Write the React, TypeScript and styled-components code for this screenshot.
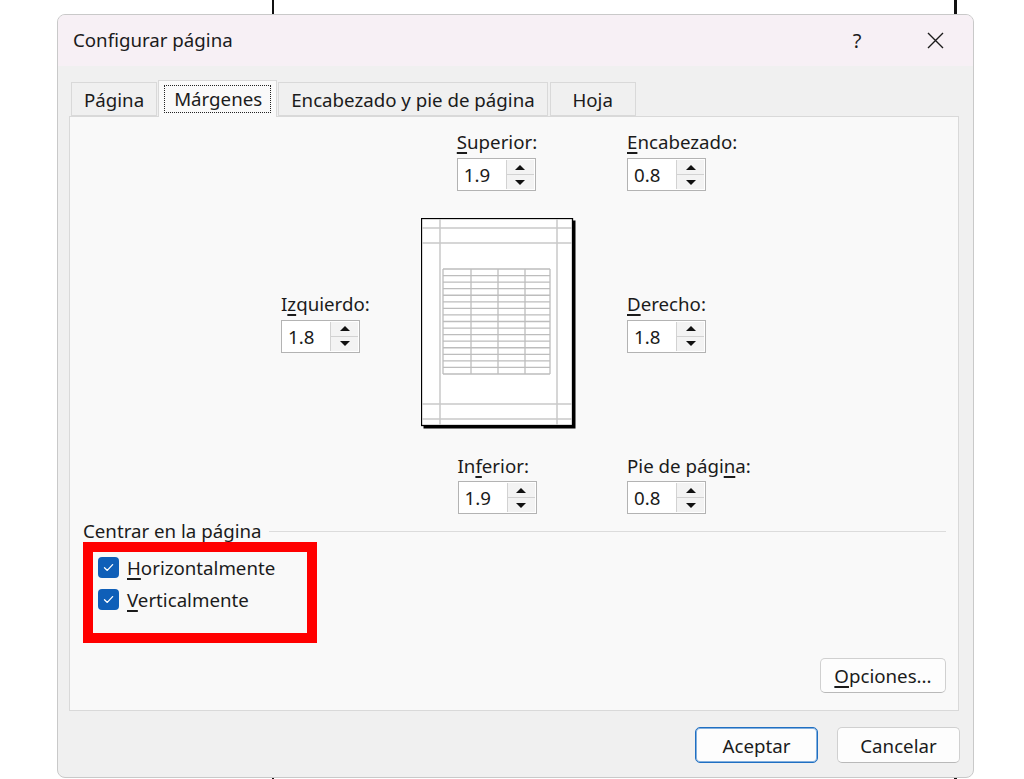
import React from 'react';
import styled, { createGlobalStyle } from 'styled-components';

const FONT = '18.7px';

const GlobalStyle = createGlobalStyle`
  html, body {
    margin: 0;
    padding: 0;
    background: #ffffff;
  }
  body {
    font-family: "Noto Sans", "Open Sans", "Liberation Sans", sans-serif;
    color: #1b1b1b;
  }
  u {
    text-underline-offset: 3px;
    text-decoration-thickness: 1.5px;
  }
`;

const Desk = styled.div`
  width: 1024px;
  height: 779px;
  box-sizing: border-box;
  padding: 14px 0 0 57px;
  background-color: #ffffff;
  background-image: linear-gradient(#111, #111), linear-gradient(#111, #111);
  background-size: 2px 100%, 3px 100%;
  background-position: 272px 0, 954px 0;
  background-repeat: no-repeat;
  overflow: hidden;
`;

const Dialog = styled.div`
  width: 917px;
  height: 764px;
  box-sizing: border-box;
  border: 1px solid #c9c9c9;
  border-radius: 8px;
  background: #f0f0f0;
  display: flex;
  flex-direction: column;
  overflow: hidden;
`;

const TitleBar = styled.div`
  height: 51px;
  flex-shrink: 0;
  display: flex;
  align-items: center;
  padding: 0 15px 0 15px;
  background: #f7f0f5;
`;

const Title = styled.div`
  flex: 1;
  font-size: ${FONT};
  margin-top: -2px;
`;

const TitleButton = styled.div<{ $w: number }>`
  width: ${(p) => p.$w}px;
  height: 36px;
  display: flex;
  align-items: center;
  justify-content: center;
  font-size: 20px;
  color: #1b1b1b;
`;

const Body = styled.div`
  flex: 1;
  display: flex;
  flex-direction: column;
  padding: 0 14px 13px 11px;
`;

const TabRow = styled.div`
  height: 50px;
  flex-shrink: 0;
  display: flex;
  align-items: flex-end;
  padding-left: 2px;
`;

const Tab = styled.div<{ $active?: boolean }>`
  position: relative;
  box-sizing: border-box;
  min-width: 86px;
  height: ${(p) => (p.$active ? 37 : 34)}px;
  padding: ${(p) => (p.$active ? '0 6px' : '0 12px')};
  margin: ${(p) => (p.$active ? '0 1px -1px -1px' : '0 2px 0 0')};
  z-index: ${(p) => (p.$active ? 2 : 1)};
  display: flex;
  align-items: center;
  justify-content: center;
  white-space: nowrap;
  font-size: ${FONT};
  background: ${(p) => (p.$active ? '#f9f9f9' : '#f0f0f0')};
  border: 1px solid #d9d9d9;
  border-bottom: ${(p) => (p.$active ? 'none' : '1px solid #d9d9d9')};
`;

const FocusText = styled.span`
  padding: 0 8px 1px 9px;
  line-height: 25px;
  outline: 1px dotted #222;
`;

const Panel = styled.div`
  height: 595px;
  box-sizing: border-box;
  flex-shrink: 0;
  display: flex;
  flex-direction: column;
  border: 1px solid #d9d9d9;
  background: #f9f9f9;
  padding: 14px 12px 17px 0;
`;

const MarginGrid = styled.div`
  margin-left: 211px;
  display: grid;
  grid-template-columns: 140px 152px 54px 1fr;
  grid-template-rows: auto 209px auto;
  row-gap: 27px;
`;

const Field = styled.div<{ $col: number; $row: number; $center?: boolean }>`
  grid-column: ${(p) => p.$col};
  grid-row: ${(p) => p.$row};
  justify-self: ${(p) => (p.$center ? 'center' : 'start')};
  align-self: center;
  display: flex;
  flex-direction: column;
  gap: ${(p) => (p.$row === 3 ? 4 : 5)}px;
  margin-top: ${(p) => (p.$row === 3 ? 1 : 0)}px;
`;

const FieldLabel = styled.div`
  font-size: ${FONT};
  line-height: 22px;
  white-space: nowrap;
`;

const SpinBox = styled.div`
  width: 79px;
  height: 33px;
  box-sizing: border-box;
  display: flex;
  align-items: center;
  border: 1px solid #b3b3b3;
  background: #ffffff;
  padding: 1px;
`;

const SpinValue = styled.div`
  flex: 1;
  padding-left: 5px;
  font-size: ${FONT};
`;

const SpinButtons = styled.div`
  width: 27px;
  height: 100%;
  display: flex;
  flex-direction: column;
  border-left: 1px solid #d2d2d2;
`;

const SpinArrow = styled.div<{ $down?: boolean }>`
  flex: 1;
  display: flex;
  align-items: center;
  justify-content: center;
  background: #f3f3f3;
  border-top: ${(p) => (p.$down ? '1px solid #d2d2d2' : 'none')};
  &::after {
    content: '';
    border-left: 5px solid transparent;
    border-right: 5px solid transparent;
    ${(p) => (p.$down ? 'border-top: 5px solid #111;' : 'border-bottom: 5px solid #111;')}
  }
`;

const PreviewCell = styled.div`
  grid-column: 2;
  grid-row: 2;
`;

const SectionHeader = styled.div`
  display: flex;
  align-items: center;
  gap: 8px;
  margin: 6px 0 0 13px;
  font-size: ${FONT};
  line-height: 22px;
`;

const Rule = styled.div`
  flex: 1;
  height: 1px;
  background: #dcdcdc;
`;

const Highlight = styled.div`
  width: 234px;
  height: 101px;
  box-sizing: border-box;
  margin-left: 13px;
  border: 10px solid #ff0000;
  padding: 0 0 0 5px;
  display: flex;
  flex-direction: column;
  gap: 2px;
`;

const CheckRow = styled.div`
  height: 30px;
  display: flex;
  align-items: center;
  gap: 8px;
  font-size: ${FONT};
  white-space: nowrap;
`;

const CheckBox = styled.div`
  width: 21px;
  height: 21px;
  border-radius: 4px;
  background: #0f5fb8;
  display: flex;
  align-items: center;
  justify-content: center;
`;

const OptionsRow = styled.div`
  margin-top: auto;
  display: flex;
  justify-content: flex-end;
`;

const Button = styled.div<{ $primary?: boolean; $w: number; $h: number }>`
  width: ${(p) => p.$w}px;
  height: ${(p) => p.$h}px;
  box-sizing: border-box;
  display: flex;
  align-items: center;
  justify-content: center;
  font-size: ${FONT};
  border-radius: 5px;
  background: #fdfdfd;
  border: 1px solid ${(p) => (p.$primary ? '#1f6fc2' : '#d0d0d0')};
  border-bottom-color: ${(p) => (p.$primary ? '#1f6fc2' : '#b9b9b9')};
  box-shadow: ${(p) => (p.$primary ? 'inset 0 0 0 1px rgba(31,111,194,0.55)' : 'none')};
`;

const Footer = styled.div`
  display: flex;
  justify-content: flex-end;
  gap: 19px;
  padding-top: 16px;
  margin-right: -1px;
`;

const CloseIcon = () => (
  <svg width="17" height="17" viewBox="0 0 17 17">
    <path d="M1 1 L16 16 M16 1 L1 16" stroke="#1b1b1b" strokeWidth="1.4" />
  </svg>
);

const CheckIcon = () => (
  <svg width="13" height="13" viewBox="0 0 13 13">
    <path d="M2.5 6.8 L5.3 9.4 L10.6 3.6" stroke="#fff" strokeWidth="1.3" fill="none" strokeLinecap="round" strokeLinejoin="round" />
  </svg>
);

const PagePreview = () => {
  const rows = Array.from({ length: 17 }, (_, i) => 51 + i * (105 / 16));
  const cols = [22, 50, 77, 104, 129];
  return (
    <svg width="155" height="211" viewBox="0 0 155 211">
      <rect x="2.5" y="2.5" width="152" height="208" fill="#000" />
      <rect x="0.5" y="0.5" width="151" height="207" fill="#fff" stroke="#000" strokeWidth="1.3" />
      <g stroke="#c8c8c8" strokeWidth="1.5">
        <line x1="19" y1="1" x2="19" y2="207" />
        <line x1="136" y1="1" x2="136" y2="207" />
        <line x1="1" y1="10" x2="151" y2="10" />
        <line x1="1" y1="25" x2="151" y2="25" />
        <line x1="1" y1="186" x2="151" y2="186" />
        <line x1="1" y1="201" x2="151" y2="201" />
      </g>
      <g stroke="#bdbdbd" strokeWidth="1.3">
        {rows.map((y, i) => (
          <line key={`r${i}`} x1="22" y1={y} x2="129" y2={y} />
        ))}
        {cols.map((x, i) => (
          <line key={`c${i}`} x1={x} y1="51" x2={x} y2="156" />
        ))}
      </g>
    </svg>
  );
};

interface SpinProps {
  label: React.ReactNode;
  value: string;
  col: number;
  row: number;
  center?: boolean;
}

const SpinField = ({ label, value, col, row, center }: SpinProps) => (
  <Field $col={col} $row={row} $center={center}>
    <FieldLabel>{label}</FieldLabel>
    <SpinBox>
      <SpinValue>{value}</SpinValue>
      <SpinButtons>
        <SpinArrow />
        <SpinArrow $down />
      </SpinButtons>
    </SpinBox>
  </Field>
);

export default function App() {
  return (
    <>
      <GlobalStyle />
      <Desk>
        <Dialog>
          <TitleBar>
            <Title>Configurar página</Title>
            <TitleButton $w={40}>?</TitleButton>
            <TitleButton $w={35} />
            <TitleButton $w={46}>
              <CloseIcon />
            </TitleButton>
          </TitleBar>
          <Body>
            <TabRow>
              <Tab>Página</Tab>
              <Tab $active>
                <FocusText>Márgenes</FocusText>
              </Tab>
              <Tab>Encabezado y pie de página</Tab>
              <Tab>Hoja</Tab>
            </TabRow>
            <Panel>
              <MarginGrid>
                <SpinField label={<><u>S</u>uperior:</>} value="1.9" col={2} row={1} center />
                <SpinField label={<><u>E</u>ncabezado:</>} value="0.8" col={4} row={1} />
                <SpinField label={<>I<u>z</u>quierdo:</>} value="1.8" col={1} row={2} />
                <PreviewCell>
                  <PagePreview />
                </PreviewCell>
                <SpinField label={<><u>D</u>erecho:</>} value="1.8" col={4} row={2} />
                <SpinField label={<>In<u>f</u>erior:</>} value="1.9" col={2} row={3} center />
                <SpinField label={<>Pie de pági<u>n</u>a:</>} value="0.8" col={4} row={3} />
              </MarginGrid>
              <SectionHeader>
                Centrar en la página
                <Rule />
              </SectionHeader>
              <Highlight>
                <CheckRow>
                  <CheckBox>
                    <CheckIcon />
                  </CheckBox>
                  <span>
                    <u>H</u>orizontalmente
                  </span>
                </CheckRow>
                <CheckRow>
                  <CheckBox>
                    <CheckIcon />
                  </CheckBox>
                  <span>
                    <u>V</u>erticalmente
                  </span>
                </CheckRow>
              </Highlight>
              <OptionsRow>
                <Button $w={126} $h={35}>
                  <span>
                    <u>O</u>pciones...
                  </span>
                </Button>
              </OptionsRow>
            </Panel>
            <Footer>
              <Button $primary $w={123} $h={36}>
                Aceptar
              </Button>
              <Button $w={123} $h={36}>
                Cancelar
              </Button>
            </Footer>
          </Body>
        </Dialog>
      </Desk>
    </>
  );
}
